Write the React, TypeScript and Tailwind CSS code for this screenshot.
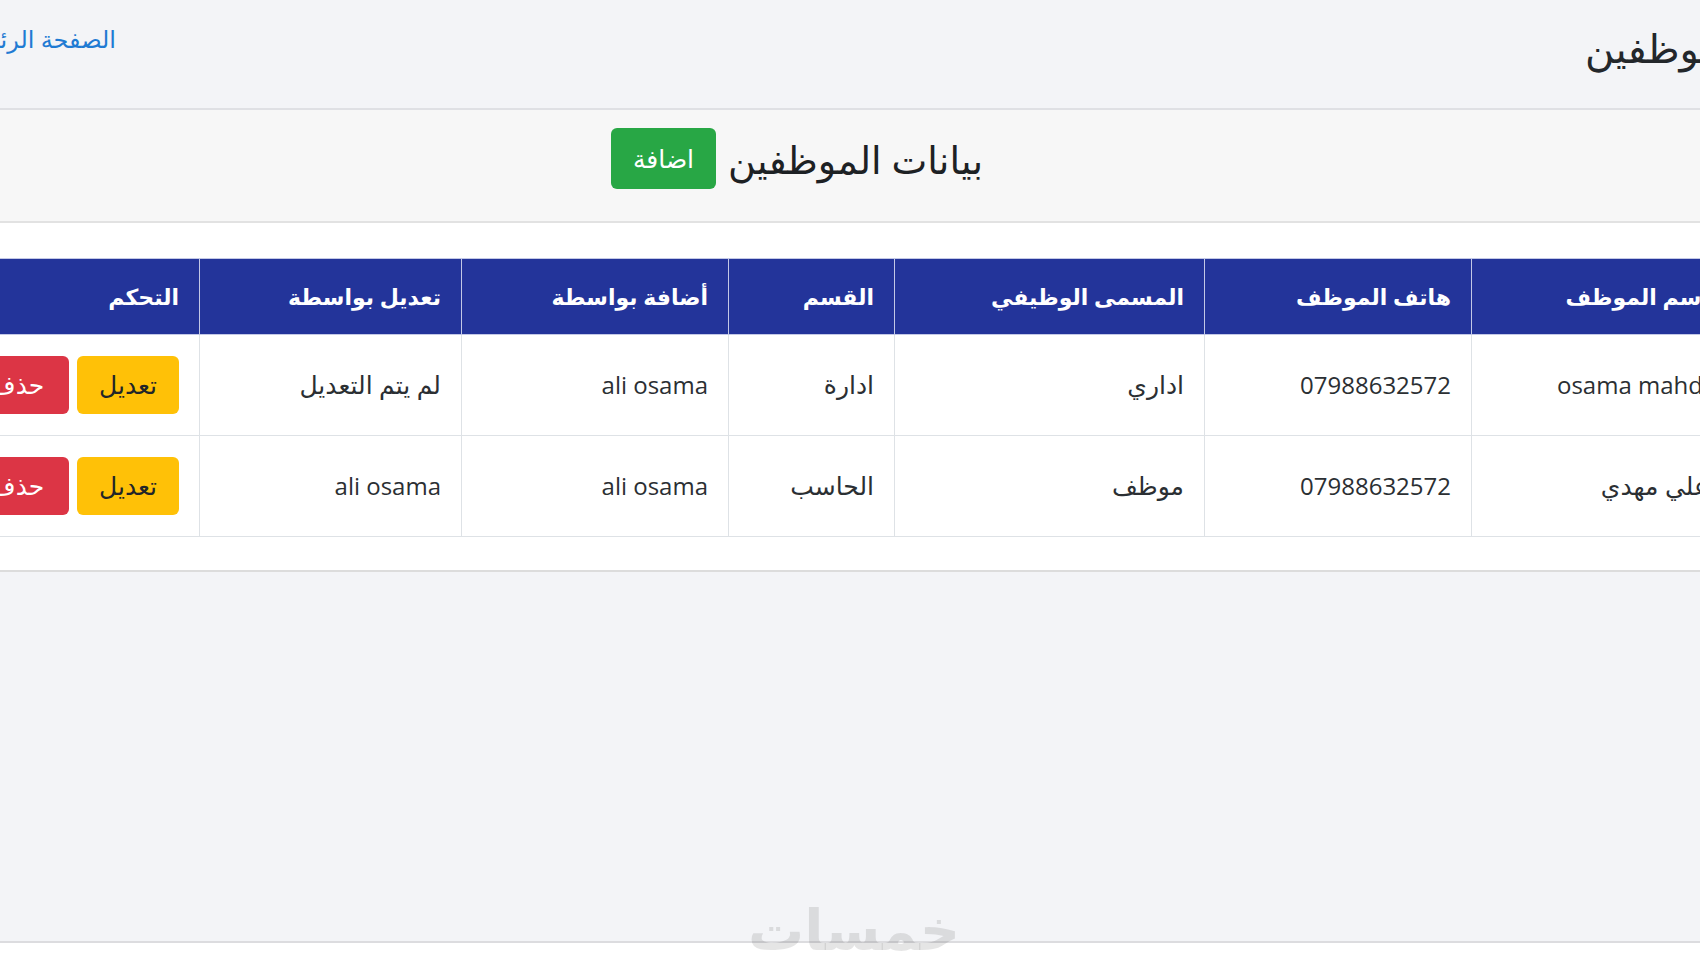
import React from "react";

const FONT = { fontFamily: '"Open Sans", "DejaVu Sans", "Noto Sans", sans-serif' };

const headers = [
  { label: "اسم الموظف", w: "w-[258px]" },
  { label: "هاتف الموظف", w: "w-[267px]" },
  { label: "المسمى الوظيفي", w: "w-[310px]" },
  { label: "القسم", w: "w-[166px]" },
  { label: "أضافة بواسطة", w: "w-[267px]" },
  { label: "تعديل بواسطة", w: "w-[262px]" },
  { label: "التحكم", w: "w-[230px]" },
];

const rows = [
  ["osama mahdi", "07988632572", "اداري", "ادارة", "ali osama", "لم يتم التعديل"],
  ["علي مهدي", "07988632572", "موظف", "الحاسب", "ali osama", "ali osama"],
];

const isLatin = (s: string) => /^[A-Za-z0-9 ]+$/.test(s);

export default function App() {
  return (
    <div
      className="relative w-[1700px] h-[970px] overflow-hidden bg-[#f3f4f7] flex flex-col text-[#212529]"
      style={FONT}
    >
      {/* top bar */}
      <div className="h-[110px] shrink-0 border-b-2 border-[#dfe0e4] flex items-start">
        <div className="w-[116px] shrink-0 flex justify-end whitespace-nowrap pt-[21px]">
          <a dir="rtl" className="text-[24px] leading-[36px] text-[#1f7bd3]">
            الصفحة الرئيسية
          </a>
        </div>
        <div className="flex-1" />
        <div className="w-[115px] shrink-0 whitespace-nowrap pt-[18px]" dir="ltr">
          <span dir="rtl" className="text-[40px] leading-[60px] text-[#23272b]">
            الموظفين
          </span>
        </div>
      </div>

      {/* card */}
      <div
        dir="rtl"
        className="shrink-0 w-[1906px] -ml-[156px] bg-white border-b-2 border-[#dcdcdc]"
      >
        <div className="h-[113px] pb-[14px] bg-[#f7f7f7] border-b-2 border-[#e2e2e2] flex items-center justify-center gap-[12px]">
          <h2 className="text-[38px] leading-[56px] text-[#1d2124]">بيانات الموظفين</h2>
          <button className="w-[105px] h-[61px] rounded-[6px] bg-[#28a745] text-white text-[25px] flex items-center justify-center">
            اضافة
          </button>
        </div>
        <div className="pt-[35px] pb-[33px] pr-[20px]">
          <table className="table-fixed border-collapse w-[1760px]">
            <thead>
              <tr>
                {headers.map((h) => (
                  <th
                    key={h.label}
                    className={`${h.w} h-[76px] bg-[#23349a] text-white text-[22px] font-bold text-right px-[20px] border border-[#c3c8e6] align-middle`}
                  >
                    {h.label}
                  </th>
                ))}
              </tr>
            </thead>
            <tbody>
              {rows.map((r, i) => (
                <tr key={i}>
                  {r.map((c, j) => (
                    <td
                      key={j}
                      className={`h-[101px] text-right px-[20px] border border-[#dee2e6] align-middle text-[#2b2f33] whitespace-nowrap ${
                        isLatin(c) ? "text-[24px]" : "text-[25px]"
                      }`}
                    >
                      {c}
                    </td>
                  ))}
                  <td className="h-[101px] text-right px-[20px] border border-[#dee2e6] align-middle">
                    <div className="flex gap-[8px]">
                      <button className="shrink-0 w-[102px] h-[58px] rounded-[6px] bg-[#ffc107] text-[#212529] text-[25px] flex items-center justify-center">
                        تعديل
                      </button>
                      <button className="shrink-0 w-[104px] h-[58px] rounded-[6px] bg-[#dc3545] text-white text-[25px] flex items-center justify-center whitespace-nowrap">
                        حذف
                      </button>
                    </div>
                  </td>
                </tr>
              ))}
            </tbody>
          </table>
        </div>
      </div>

      <div className="flex-1" />
      <div className="h-[29px] shrink-0 bg-white border-t-2 border-[#dcdcdf]" />

      {/* watermark */}
      <div
        dir="rtl"
        className="absolute left-[748px] top-[888px] text-[56px] font-bold leading-[80px] text-black/10 select-none"
      >
        خمسات
      </div>
    </div>
  );
}
